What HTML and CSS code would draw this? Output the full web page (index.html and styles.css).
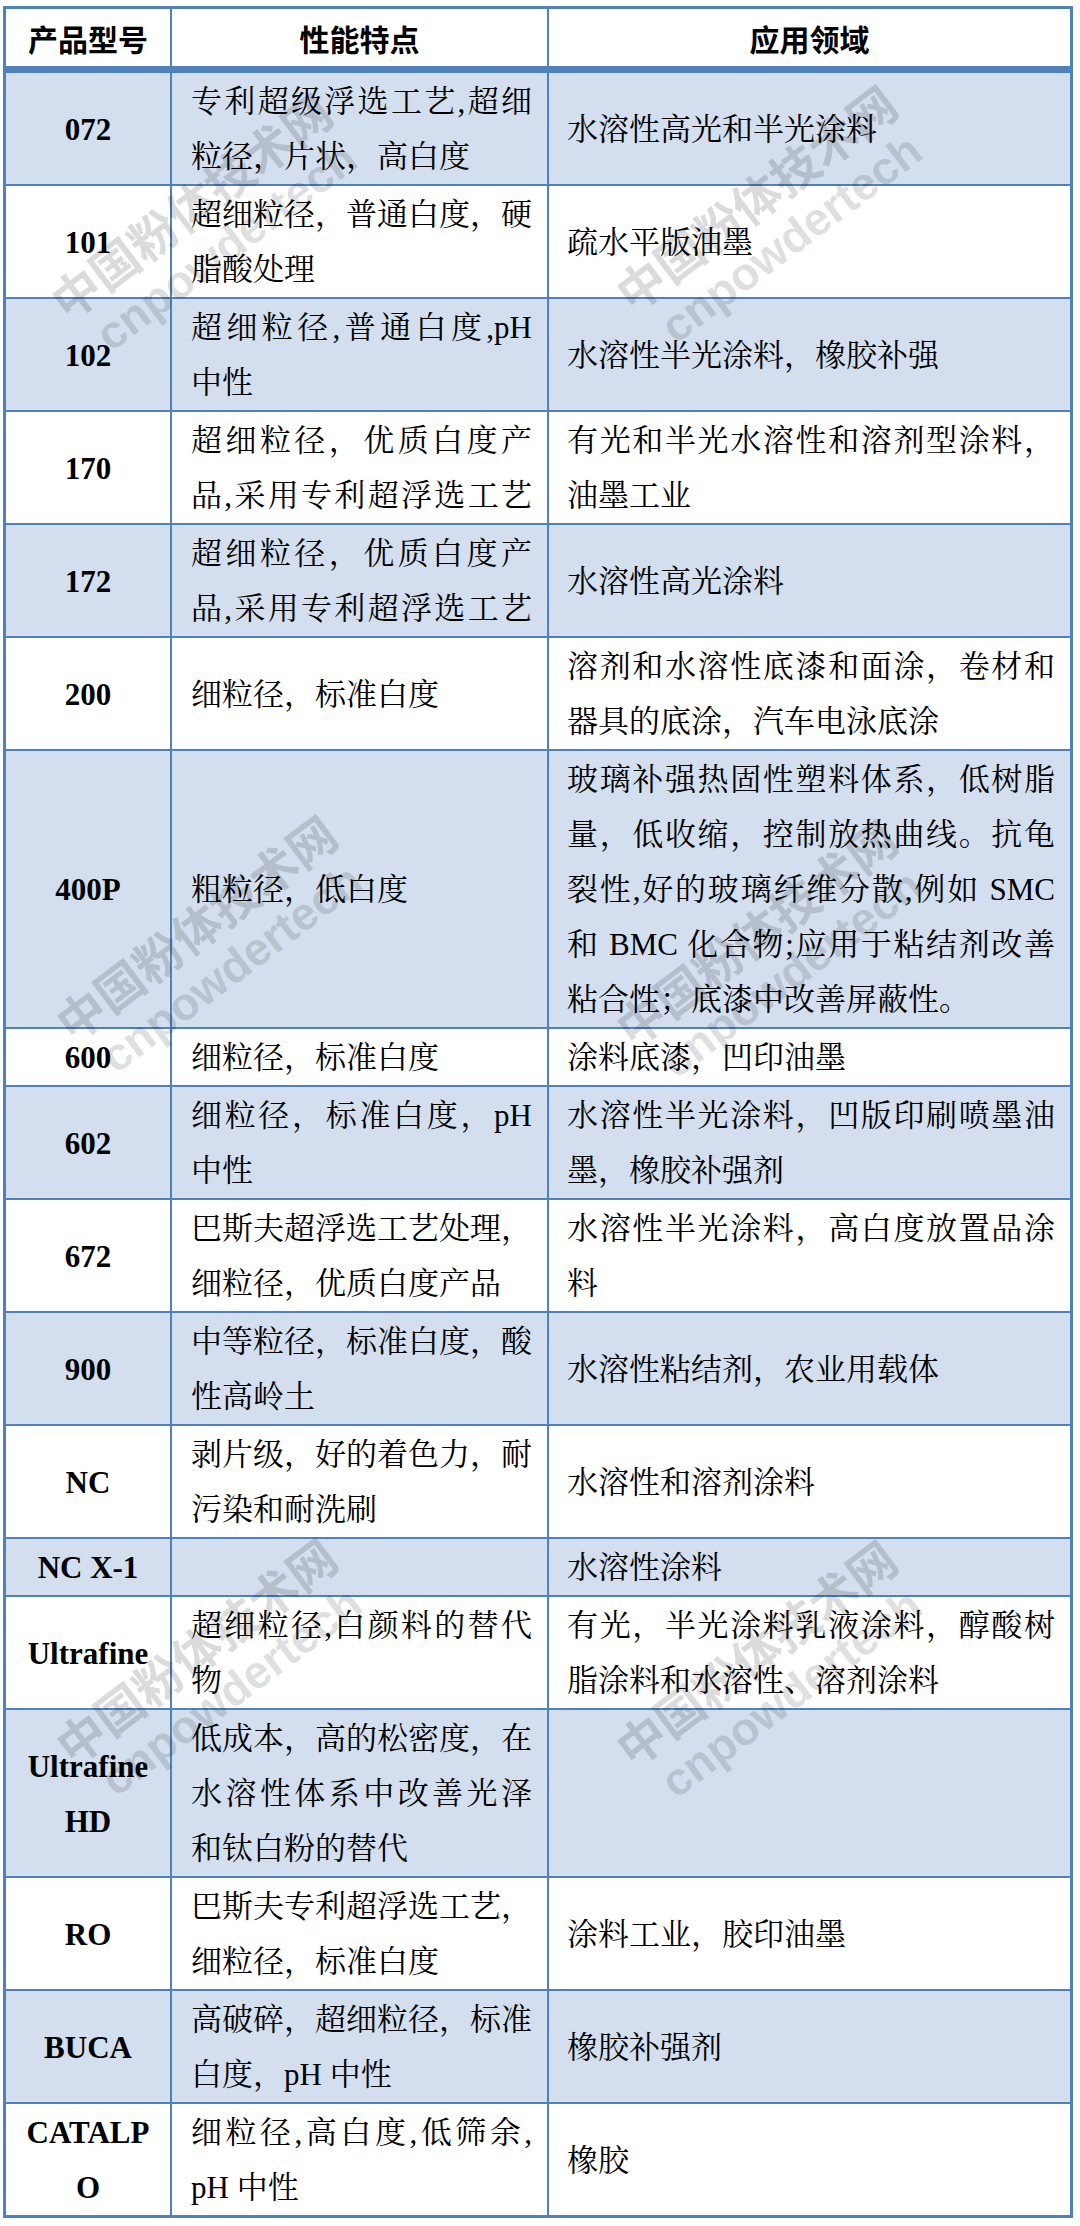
FILE: index.html
```html
<!DOCTYPE html>
<html lang="zh-CN">
<head>
<meta charset="utf-8">
<title>产品型号</title>
<link rel="stylesheet" href="styles.css">
</head>
<body>
<div class="page">
  <table class="spec">
    <thead>
      <tr><th class="h1">产品型号</th><th class="h2">性能特点</th><th class="h3">应用领域</th></tr>
    </thead>
    <tbody>
      <tr class="alt"><td class="code">072</td><td class="feat"><span class="full">专利超级浮选工艺,超细</span>粒径，片状，高白度</td><td class="use">水溶性高光和半光涂料</td></tr>
      <tr><td class="code">101</td><td class="feat"><span class="full">超细粒径，普通白度，硬</span>脂酸处理</td><td class="use">疏水平版油墨</td></tr>
      <tr class="alt"><td class="code">102</td><td class="feat"><span class="full">超细粒径,普通白度,pH</span>中性</td><td class="use">水溶性半光涂料，橡胶补强</td></tr>
      <tr><td class="code">170</td><td class="feat"><span class="full">超细粒径，优质白度产</span><span class="full">品,采用专利超浮选工艺</span></td><td class="use"><span class="full">有光和半光水溶性和溶剂型涂料，</span>油墨工业</td></tr>
      <tr class="alt"><td class="code">172</td><td class="feat"><span class="full">超细粒径，优质白度产</span><span class="full">品,采用专利超浮选工艺</span></td><td class="use">水溶性高光涂料</td></tr>
      <tr><td class="code">200</td><td class="feat">细粒径，标准白度</td><td class="use"><span class="full">溶剂和水溶性底漆和面涂，卷材和</span>器具的底涂，汽车电泳底涂</td></tr>
      <tr class="alt"><td class="code">400P</td><td class="feat">粗粒径，低白度</td><td class="use"><span class="full">玻璃补强热固性塑料体系，低树脂</span><span class="full">量，低收缩，控制放热曲线。抗龟</span><span class="full">裂性,好的玻璃纤维分散,例如 SMC</span><span class="full">和 BMC 化合物;应用于粘结剂改善</span>粘合性；底漆中改善屏蔽性。</td></tr>
      <tr><td class="code">600</td><td class="feat">细粒径，标准白度</td><td class="use">涂料底漆，凹印油墨</td></tr>
      <tr class="alt"><td class="code">602</td><td class="feat"><span class="full">细粒径，标准白度，pH</span>中性</td><td class="use"><span class="full">水溶性半光涂料，凹版印刷喷墨油</span>墨，橡胶补强剂</td></tr>
      <tr><td class="code">672</td><td class="feat"><span class="full">巴斯夫超浮选工艺处理，</span>细粒径，优质白度产品</td><td class="use"><span class="full">水溶性半光涂料，高白度放置品涂</span>料</td></tr>
      <tr class="alt"><td class="code">900</td><td class="feat"><span class="full">中等粒径，标准白度，酸</span>性高岭土</td><td class="use">水溶性粘结剂，农业用载体</td></tr>
      <tr><td class="code">NC</td><td class="feat"><span class="full">剥片级，好的着色力，耐</span>污染和耐洗刷</td><td class="use">水溶性和溶剂涂料</td></tr>
      <tr class="alt"><td class="code">NC X-1</td><td class="feat"></td><td class="use">水溶性涂料</td></tr>
      <tr><td class="code">Ultrafine</td><td class="feat"><span class="full">超细粒径,白颜料的替代</span>物</td><td class="use"><span class="full">有光，半光涂料乳液涂料，醇酸树</span>脂涂料和水溶性、溶剂涂料</td></tr>
      <tr class="alt"><td class="code">Ultrafine<br>HD</td><td class="feat"><span class="full">低成本，高的松密度，在</span><span class="full">水溶性体系中改善光泽</span>和钛白粉的替代</td><td class="use"></td></tr>
      <tr><td class="code">RO</td><td class="feat"><span class="full">巴斯夫专利超浮选工艺，</span>细粒径，标准白度</td><td class="use">涂料工业，胶印油墨</td></tr>
      <tr class="alt"><td class="code">BUCA</td><td class="feat"><span class="full">高破碎，超细粒径，标准</span>白度，pH 中性</td><td class="use">橡胶补强剂</td></tr>
      <tr class="last"><td class="code">CATALP<br>O</td><td class="feat"><span class="full">细粒径,高白度,低筛余,</span>pH 中性</td><td class="use">橡胶</td></tr>
    </tbody>
  </table>

  <div class="wm wm-a"><div class="wm-cn">中国粉体技术网</div><div class="wm-en">cnpowdertech</div></div>
  <div class="wm wm-b"><div class="wm-cn">中国粉体技术网</div><div class="wm-en">cnpowdertech</div></div>
  <div class="wm wm-c"><div class="wm-cn">中国粉体技术网</div><div class="wm-en">cnpowdertech</div></div>
  <div class="wm wm-d"><div class="wm-cn">中国粉体技术网</div><div class="wm-en">cnpowdertech</div></div>
  <div class="wm wm-e"><div class="wm-cn">中国粉体技术网</div><div class="wm-en">cnpowdertech</div></div>
  <div class="wm wm-f"><div class="wm-cn">中国粉体技术网</div><div class="wm-en">cnpowdertech</div></div>
</div>
</body>
</html>
```

FILE: styles.css
```css
html, body {
  margin: 0;
  padding: 0;
  background: #ffffff;
}

.page {
  position: relative;
  width: 1080px;
  box-sizing: border-box;
  padding: 6px 7px 4px 3px;
}

.spec {
  width: 1070px;
  table-layout: fixed;
  border-collapse: separate;
  border-spacing: 0;
  border-top: 3px solid #4f81bd;
  border-left: 3px solid #4f81bd;
  font-family: "Liberation Serif", "Noto Serif CJK SC", "Noto Sans CJK SC", serif;
  font-size: 31px;
  color: #000;
}

.spec th,
.spec td {
  box-sizing: border-box;
  border-right: 2px solid #4f81bd;
  border-bottom: 2px solid #4f81bd;
  line-height: 55px;
  vertical-align: middle;
}

.spec th {
  font-family: "Noto Sans CJK SC", sans-serif;
  font-weight: 700;
  font-size: 30px;
  text-align: center;
  padding: 2px 0 0;
  border-bottom-width: 7px;
  background: #fff;
}

.spec .h1 { width: 166px; }
.spec .h2 { width: 377px; }
.spec .h3 { width: 524px; border-right-width: 3px; }

.spec td {
  padding-top: 1px;
  padding-bottom: 0;
  background: #fff;
}

.spec tr.alt td {
  background: #d3dfee;
}

.spec tr.last td {
  border-bottom-width: 3px;
}

.spec td.code {
  font-weight: 700;
  text-align: center;
  padding-left: 0;
  padding-right: 0;
}

.spec td.feat {
  padding-left: 19px;
  padding-right: 15px;
  text-align: left;
}

.spec td.use {
  padding-left: 18px;
  padding-right: 15px;
  text-align: left;
  border-right-width: 3px;
}

.full {
  display: block;
  text-align: justify;
  text-align-last: justify;
}

.wm {
  position: absolute;
  width: 360px;
  transform: rotate(-37deg);
  transform-origin: 50% 50%;
  color: rgba(0, 0, 0, 0.14);
  font-weight: 700;
  pointer-events: none;
  white-space: nowrap;
}

.wm-cn {
  font-family: "Noto Sans CJK SC", sans-serif;
  font-size: 48px;
  line-height: 58px;
}

.wm-en {
  font-family: "Liberation Sans", sans-serif;
  font-size: 46px;
  line-height: 52px;
  padding-left: 16px;
}

.wm-a { left: 35px;  top: 163px; }
.wm-b { left: 600px; top: 155px; }
.wm-c { left: 40px;  top: 885px; }
.wm-d { left: 600px; top: 890px; }
.wm-e { left: 40px;  top: 1608px; }
.wm-f { left: 600px; top: 1610px; }
```
